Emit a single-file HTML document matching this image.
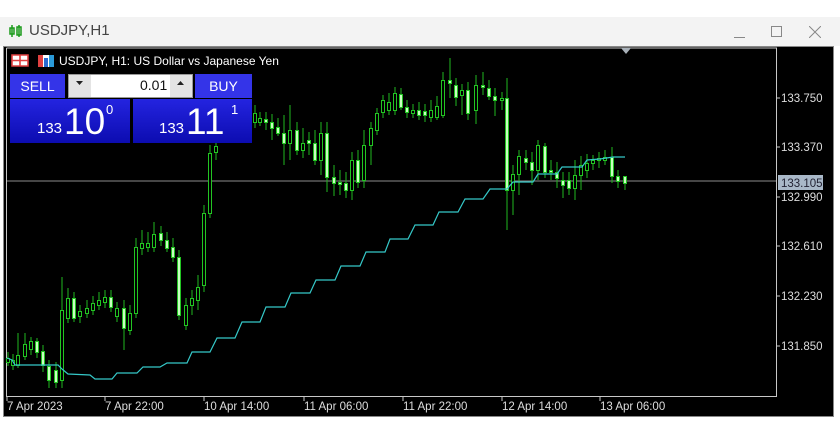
<!DOCTYPE html>
<html><head><meta charset="utf-8"><style>
*{margin:0;padding:0;box-sizing:border-box}
body{width:840px;height:436px;background:#fff;position:relative;overflow:hidden;font-family:"Liberation Sans",sans-serif}
.t{position:absolute;white-space:nowrap}
.btn{position:absolute;background:#3434e8;color:#fff;font-size:14px;text-align:center;line-height:24px}
.pp{position:absolute;background:linear-gradient(#2424e0,#0c0cb0);color:#fff}
</style></head><body>
<div style="position:absolute;left:0;top:17px;width:840px;height:29px;background:#f3f3f3"></div>
<svg style="position:absolute;left:9px;top:24px" width="14" height="14"><path d="M3 1V13M10 1V13" stroke="#1a9a1a" stroke-width="1.5"/><rect x="1" y="4" width="4" height="6" fill="none" stroke="#1a9a1a" stroke-width="1.5"/><rect x="8" y="3" width="4" height="8" fill="none" stroke="#1a9a1a" stroke-width="1.5"/></svg>
<div class="t" style="left:29px;top:22px;font-size:15px;color:#444">USDJPY,H1</div>
<div style="position:absolute;left:734px;top:37px;width:11px;height:1px;background:#888"></div>
<div style="position:absolute;left:771px;top:26px;width:11px;height:11px;border:1px solid #888"></div>
<svg style="position:absolute;left:809px;top:26px" width="12" height="12"><path d="M0 0L12 12M12 0L0 12" stroke="#888"/></svg>
<div style="position:absolute;left:3px;top:46px;width:831px;height:371px;background:#000;border:1px solid #888"></div>
<svg style="position:absolute;left:0;top:0" width="840" height="436">
<path d="M6.5 48V396.5H776.5V48H6.5" fill="none" stroke="#c8c8c8"/>
<path d="M621 48h10l-5 6z" fill="#a8b0b8"/>
<path d="M777 98h3M777 147h3M777 197h3M777 246h3M777 296h3M777 346h3M7 397v4M105 397v4M204 397v4M304 397v4M403 397v4M502 397v4M600 397v4" stroke="#c8c8c8"/>
<path d="M7 181H776" stroke="#8c8c8c"/>
<path d="M8 352V366M13 354V370M18 333V368M25 333V360M31 337V355M37 338V358M43 345V372M49 360V388M56 362V388M62 277V388M68 288V323M74 292V322M80 305V323M87 300V318M93 296V315M99 292V310M105 290V308M111 290V312M117 302V322M124 300V350M130 305V335M136 238V318M142 230V255M148 232V252M154 222V252M161 226V246M167 232V252M173 238V262M179 250V320M186 298V330M192 290V315M198 275V310M204 205V292M210 145V218M216 140V160M255 105V128M260 112V126M266 112V130M272 114V140M278 118V136M284 115V165M290 105V160M297 122V155M303 128V158M309 132V155M315 130V165M321 122V175M327 122V192M334 165V196M340 170V195M346 172V198M352 152V200M358 150V188M364 130V188M371 122V165M377 108V135M383 95V118M389 93V115M395 87V115M401 88V110M407 100V118M413 104V118M419 102V120M425 104V122M431 100V122M437 96V120M443 72V118M450 58V98M456 78V106M462 84V115M468 82V120M476 75V124M483 72V95M489 80V100M495 88V116M502 92V110M507 78V230M513 165V215M519 150V195M526 150V170M532 152V185M538 140V180M545 143V178M551 160V180M557 162V188M563 172V198M569 172V195M575 160V200M581 156V190M587 154V178M593 155V170M599 152V168M605 150V165M612 147V183M618 170V188M625 176V190" stroke="#1fb81f"/>
<g stroke="#22c522" fill="#000">
<rect x="6.5" y="358.5" width="3" height="4"/><rect x="11.5" y="360.5" width="3" height="5"/><rect x="16.5" y="355.5" width="3" height="10"/><rect x="23.5" y="344.5" width="3" height="12"/><rect x="29.5" y="341.5" width="3" height="8"/><rect x="60.5" y="310.5" width="3" height="70"/><rect x="66.5" y="298.5" width="3" height="20"/><rect x="78.5" y="311.5" width="3" height="5"/><rect x="85.5" y="308.5" width="3" height="5"/><rect x="91.5" y="303.5" width="3" height="7"/><rect x="97.5" y="300.5" width="3" height="5"/><rect x="103.5" y="297.5" width="3" height="5"/><rect x="115.5" y="308.5" width="3" height="8"/><rect x="128.5" y="313.5" width="3" height="17"/><rect x="134.5" y="247.5" width="3" height="66"/><rect x="140.5" y="243.5" width="3" height="5"/><rect x="146.5" y="243.5" width="3" height="4"/><rect x="152.5" y="234.5" width="3" height="13"/><rect x="184.5" y="305.5" width="3" height="20"/><rect x="190.5" y="298.5" width="3" height="7"/><rect x="196.5" y="287.5" width="3" height="13"/><rect x="202.5" y="213.5" width="3" height="72"/><rect x="208.5" y="153.5" width="3" height="60"/><rect x="214.5" y="146.5" width="3" height="6"/><rect x="253.5" y="113.5" width="3" height="9"/><rect x="258.5" y="118.5" width="3" height="4"/><rect x="288.5" y="130.5" width="3" height="13"/><rect x="301.5" y="143.5" width="3" height="7"/><rect x="319.5" y="133.5" width="3" height="27"/><rect x="350.5" y="160.5" width="3" height="30"/><rect x="362.5" y="145.5" width="3" height="35"/><rect x="369.5" y="128.5" width="3" height="17"/><rect x="375.5" y="113.5" width="3" height="17"/><rect x="381.5" y="100.5" width="3" height="12"/><rect x="387.5" y="102.5" width="3" height="8"/><rect x="393.5" y="93.5" width="3" height="17"/><rect x="411.5" y="110.5" width="3" height="3"/><rect x="429.5" y="110.5" width="3" height="7"/><rect x="435.5" y="106.5" width="3" height="11"/><rect x="441.5" y="80.5" width="3" height="35"/><rect x="460.5" y="90.5" width="3" height="5"/><rect x="474.5" y="85.5" width="3" height="25"/><rect x="500.5" y="98.5" width="3" height="2"/><rect x="511.5" y="174.5" width="3" height="16"/><rect x="517.5" y="156.5" width="3" height="18"/><rect x="536.5" y="145.5" width="3" height="25"/><rect x="573.5" y="175.5" width="3" height="13"/><rect x="579.5" y="165.5" width="3" height="10"/><rect x="585.5" y="163.5" width="3" height="7"/><rect x="591.5" y="160.5" width="3" height="3"/><rect x="597.5" y="158.5" width="3" height="2"/><rect x="603.5" y="157.5" width="3" height="3"/>
</g>
<g stroke="#22c522" fill="#c8ffc0">
<rect x="35.5" y="341.5" width="3" height="11"/><rect x="41.5" y="351.5" width="3" height="14"/><rect x="47.5" y="366.5" width="3" height="14"/><rect x="54.5" y="370.5" width="3" height="12"/><rect x="72.5" y="298.5" width="3" height="20"/><rect x="109.5" y="297.5" width="3" height="10"/><rect x="122.5" y="308.5" width="3" height="20"/><rect x="159.5" y="233.5" width="3" height="7"/><rect x="165.5" y="240.5" width="3" height="8"/><rect x="171.5" y="247.5" width="3" height="10"/><rect x="177.5" y="257.5" width="3" height="58"/><rect x="264.5" y="119.5" width="3" height="3"/><rect x="270.5" y="122.5" width="3" height="6"/><rect x="276.5" y="127.5" width="3" height="6"/><rect x="282.5" y="133.5" width="3" height="10"/><rect x="295.5" y="130.5" width="3" height="20"/><rect x="307.5" y="140.5" width="3" height="3"/><rect x="313.5" y="143.5" width="3" height="17"/><rect x="325.5" y="133.5" width="3" height="44"/><rect x="332.5" y="177.5" width="3" height="6"/><rect x="338.5" y="182.5" width="3" height="2"/><rect x="344.5" y="183.5" width="3" height="7"/><rect x="356.5" y="160.5" width="3" height="22"/><rect x="399.5" y="94.5" width="3" height="13"/><rect x="405.5" y="107.5" width="3" height="5"/><rect x="417.5" y="110.5" width="3" height="5"/><rect x="423.5" y="111.5" width="3" height="4"/><rect x="448.5" y="80.5" width="3" height="3"/><rect x="454.5" y="85.5" width="3" height="12"/><rect x="466.5" y="90.5" width="3" height="23"/><rect x="481.5" y="85.5" width="3" height="2"/><rect x="487.5" y="88.5" width="3" height="8"/><rect x="493.5" y="96.5" width="3" height="4"/><rect x="505.5" y="98.5" width="3" height="92"/><rect x="524.5" y="158.5" width="3" height="4"/><rect x="530.5" y="162.5" width="3" height="8"/><rect x="543.5" y="146.5" width="3" height="26"/><rect x="549.5" y="170.5" width="3" height="2"/><rect x="555.5" y="172.5" width="3" height="6"/><rect x="561.5" y="180.5" width="3" height="5"/><rect x="567.5" y="180.5" width="3" height="8"/><rect x="610.5" y="157.5" width="3" height="19"/><rect x="616.5" y="176.5" width="3" height="5"/><rect x="623.5" y="176.5" width="3" height="7"/>
</g>
<polyline fill="none" stroke="#35c8c8" stroke-width="1.2" points="7,358 12,360 15,365 58,365 62,369 68,374 90,375 95,379 112,379 117,373 137,373 143,367 160,367 167,363 187,363 192,352 210,352 217,338 235,338 242,322 260,322 266,307 285,307 291,293 310,293 316,280 335,280 341,266 360,266 366,252 385,252 390,239 408,239 415,225 433,225 439,212 458,212 465,199 483,199 490,189 507,189 513,182 533,182 538,174 557,174 562,167 582,167 587,160 600,159 613,157 625,157"/>
<rect x="778" y="175" width="45" height="15" fill="#a9b8c8"/>
<g font-family="Liberation Sans,sans-serif" font-size="11.5" fill="#ddd">
<text x="781" y="102">133.750</text><text x="781" y="151">133.370</text><text x="781" y="201">132.990</text><text x="781" y="250">132.610</text><text x="781" y="300">132.230</text><text x="781" y="350">131.850</text>
<text x="781" y="187" fill="#223">133.105</text>
<text x="7" y="410">7 Apr 2023</text><text x="105" y="410">7 Apr 22:00</text><text x="204" y="410">10 Apr 14:00</text><text x="304" y="410">11 Apr 06:00</text><text x="403" y="410">11 Apr 22:00</text><text x="502" y="410">12 Apr 14:00</text><text x="600" y="410">13 Apr 06:00</text>
</g>
<rect x="12" y="55" width="16" height="11" fill="#fff"/><path d="M12 55h16v11H12zM12 60.5h16M20 55v11" stroke="#e04040" stroke-width="1.6" fill="none"/>
<rect x="38" y="55" width="16" height="12" fill="#fff"/><rect x="38" y="55" width="5" height="12" fill="#e04040"/><rect x="44" y="58" width="4" height="9" fill="#2a6ad0"/><rect x="49" y="55" width="5" height="12" fill="#2a9ad8"/>
<text x="59" y="65" font-family="Liberation Sans,sans-serif" font-size="12" fill="#fff">USDJPY, H1:  US Dollar vs Japanese Yen</text>
</svg>
<div class="btn" style="left:10px;top:74px;width:55px;height:24px">SELL</div>
<div class="btn" style="left:195px;top:74px;width:57px;height:24px">BUY</div>
<div style="position:absolute;left:68px;top:74px;width:125px;height:24px;background:#fff;border:1px solid #999"></div>
<div style="position:absolute;left:69px;top:75px;width:22px;height:22px;background:#e4e4e4"></div>
<div style="position:absolute;left:170px;top:75px;width:22px;height:22px;background:#e4e4e4"></div>
<svg style="position:absolute;left:75px;top:80px" width="10" height="6"><path d="M1 1h7l-3.5 4z" fill="#222"/></svg>
<svg style="position:absolute;left:176px;top:80px" width="10" height="6"><path d="M1 5h7l-3.5-4z" fill="#222"/></svg>
<div class="t" style="left:140px;top:77px;font-size:14px;color:#111">0.01</div>
<div class="pp" style="left:10px;top:99px;width:120px;height:44px">
<span class="t" style="left:27px;top:21px;font-size:15px">133</span>
<span class="t" style="left:54px;top:2px;font-size:37px">10</span>
<span class="t" style="left:96px;top:3px;font-size:13px">0</span></div>
<div class="pp" style="left:133px;top:99px;width:119px;height:44px">
<span class="t" style="left:26px;top:21px;font-size:15px">133</span>
<span class="t" style="left:53px;top:2px;font-size:37px">11</span>
<span class="t" style="left:98px;top:3px;font-size:13px">1</span></div>
</body></html>
